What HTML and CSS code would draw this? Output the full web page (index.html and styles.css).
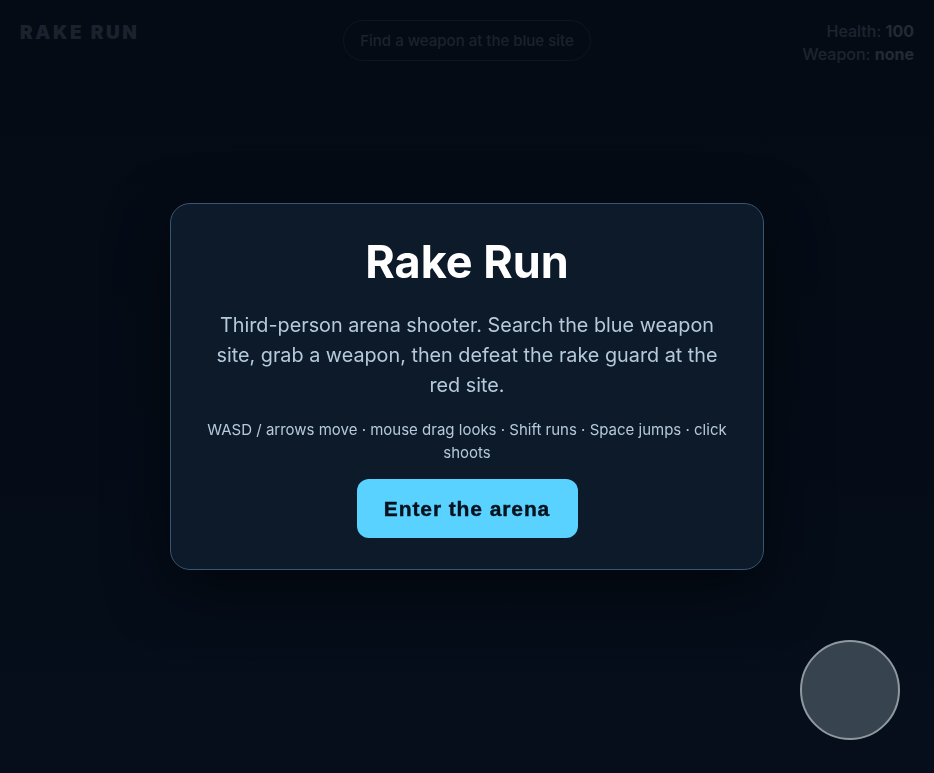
FILE: index.html
```html
<!DOCTYPE html>
<html lang="en">

<head>
  <meta charset="UTF-8" />
  <meta name="viewport" content="width=device-width, initial-scale=1.0" />
  <title>Rake Run</title>
  <link rel="stylesheet" href="styles.css">
</head>

<body>
  <div class="hud">
    <div class="brand">RAKE RUN</div>
    <div class="objective">Find a weapon at the blue site</div>
    <div class="stats">
      <div>Health: <b>100</b></div>
      <div>Weapon: <b>none</b></div>
    </div>
  </div>

  <div class="overlay">
    <div class="card">
      <h1>Rake Run</h1>
      <p class="intro">Third-person arena shooter. Search the blue weapon site, grab a weapon, then defeat the rake guard at the red site.</p>
      <p class="controls">WASD / arrows move · mouse drag looks · Shift runs · Space jumps · click shoots</p>
      <button class="start">Enter the arena</button>
    </div>
  </div>

  <div class="joystick"></div>
</body>

</html>
```

FILE: styles.css
```css
html,
body {
  height: 100%;
}

body {
  margin: 0;
  font-family: Inter, "Noto Sans", sans-serif;
  background: linear-gradient(180deg, #0a121e 0%, #0b1626 60%, #0a1a2c 100%);
  overflow: hidden;
}

.hud {
  display: grid;
  grid-template-columns: 1fr auto 1fr;
  align-items: start;
  padding: 20px 20px 0 20px;
}

.brand {
  font-weight: 900;
  font-size: 19px;
  letter-spacing: 2.6px;
  color: #3a4656;
  padding-top: 1px;
}

.objective {
  font-size: 15px;
  font-weight: 500;
  line-height: 17px;
  color: #3a4656;
  border: 1px solid #1e2a38;
  border-radius: 999px;
  padding: 11px 16px;
}

.stats {
  text-align: right;
  font-size: 16px;
  font-weight: 500;
  line-height: 23px;
  color: #3e4a5a;
}

.stats b {
  color: #4c5868;
}

.overlay {
  position: fixed;
  inset: 0;
  background: rgba(2, 6, 12, 0.55);
  display: flex;
  align-items: center;
  justify-content: center;
}

.card {
  width: 528px;
  padding: 28px 32px 31px 32px;
  background-color: #0c1a2a;
  border: 1px solid #385673;
  border-radius: 20px;
  box-shadow: 0 20px 60px rgba(0, 0, 0, 0.55);
  text-align: center;
}

.card h1 {
  margin: 0;
  font-size: 45px;
  line-height: 60px;
  font-weight: 700;
  color: #ffffff;
}

.intro {
  margin: 18px 0 0 0;
  font-size: 19.8px;
  line-height: 30px;
  color: #b6c9da;
}

.controls {
  margin: 18px 0 0 0;
  font-size: 15px;
  line-height: 23px;
  color: #b6c9da;
}

.start {
  margin-top: 15px;
  width: 221px;
  height: 59px;
  border: none;
  border-radius: 12px;
  background-color: #5ad2ff;
  color: #06121e;
  font-family: "Liberation Sans", Arial, sans-serif;
  font-weight: 700;
  font-size: 21px;
  letter-spacing: 0.9px;
  -webkit-text-stroke: 0.4px #06121e;
  cursor: pointer;
}

.joystick {
  position: fixed;
  right: 34px;
  bottom: 33px;
  width: 96px;
  height: 96px;
  border-radius: 50%;
  border: 2px solid #8e989f;
  background-color: #37434f;
}
```
